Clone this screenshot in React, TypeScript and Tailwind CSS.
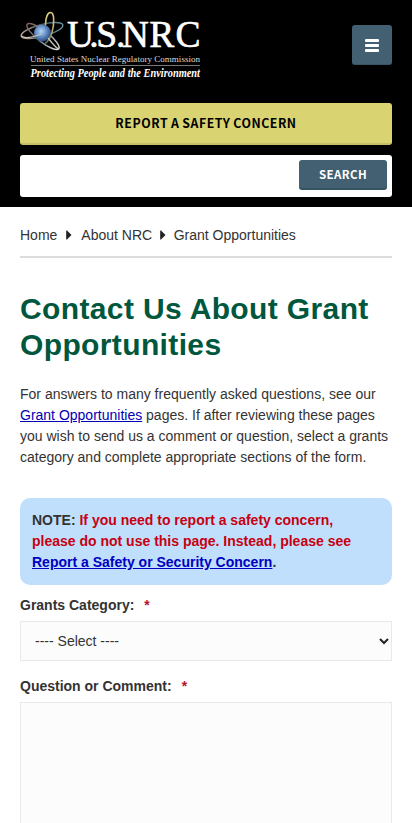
import type { ReactNode } from "react";

function Logo() {
  return (
    <svg width="184" height="72" viewBox="20 10 184 72" role="img" aria-label="U.S.NRC">
      <defs>
        <radialGradient id="core" cx="42%" cy="40%" r="60%">
          <stop offset="0" stopColor="#b5d6f2" />
          <stop offset=".5" stopColor="#6893cc" />
          <stop offset="1" stopColor="#2c4c80" />
        </radialGradient>
        <linearGradient id="goldOrbit" x1="0" y1="0" x2="0" y2="1">
          <stop offset="0" stopColor="#e4d488" />
          <stop offset=".6" stopColor="#b8a867" />
          <stop offset="1" stopColor="#536b68" />
        </linearGradient>
        <linearGradient id="wideOrbit" x1="0" y1="0" x2="1" y2="0">
          <stop offset="0" stopColor="#c8aaa0" />
          <stop offset=".55" stopColor="#46525f" />
          <stop offset="1" stopColor="#6a98a8" />
        </linearGradient>
        <linearGradient id="paleOrbit" x1="0" y1="0" x2="1" y2="0">
          <stop offset="0" stopColor="#806256" />
          <stop offset=".5" stopColor="#6d7f88" />
          <stop offset="1" stopColor="#e0e6dc" />
        </linearGradient>
      </defs>
      <ellipse cx="42" cy="30.5" rx="21.5" ry="6" transform="rotate(-15 42 30.5)" fill="none" stroke="url(#wideOrbit)" strokeWidth="1.4" />
      <ellipse cx="43" cy="36.5" rx="20" ry="5.5" transform="rotate(38 43 36.5)" fill="none" stroke="url(#paleOrbit)" strokeWidth="1.5" />
      <circle cx="42.5" cy="33" r="8.5" fill="url(#core)" />
      <path d="M45.5 25c0-7 2-12.5 5-12.5 4 0 4 11 1.5 20-1.5 5-4 9-7 11" fill="none" stroke="url(#goldOrbit)" strokeWidth="1.6" />
      <path d="M21.5 36c3 3 12 1 20-2M48 38c4 5 8 10 10.5 11" fill="none" stroke="#c9c4b6" strokeWidth="1.3" />
      <text x="67 89.3 96.3 116 121.8 149.3 175.5" y="47.3" fontFamily="Liberation Serif, serif" fontSize="37.5" fill="#fff" stroke="#fff" strokeWidth=".6">U.S.NRC</text>
      <text x="30" y="61.5" fontFamily="Liberation Serif, serif" fontSize="9" fill="#ddd" textLength="170" lengthAdjust="spacing">United States Nuclear Regulatory Commission</text>
      <path d="M31 65.5h169" stroke="#777" strokeWidth="1" />
      <text x="30.5" y="77" fontFamily="Liberation Serif, serif" fontSize="11.5" fontWeight="bold" fontStyle="italic" fill="#fff" textLength="169.5" lengthAdjust="spacingAndGlyphs">Protecting People and the Environment</text>
    </svg>
  );
}

function Caret() {
  return (
    <svg width="6" height="10" viewBox="0 0 6 10" className="shrink-0" fill="#222">
      <path d="M.2.5h.8L5.5 5 1 9.500H.2z" />
    </svg>
  );
}

function Label({ children }: { children: ReactNode }) {
  return (
    <label className="block h-[21px] font-bold leading-[21px]">
      {children}
      <span className="ml-[10px] text-[#b51230]">*</span>
    </label>
  );
}

export default function App() {
  return (
    <div className="h-[823px] overflow-hidden bg-white font-['Liberation_Sans',Arial,sans-serif] text-sm text-[#333]">
      <header className="h-[207px] bg-black px-5 pt-[10px]">
        <div className="flex h-[93px] items-start justify-between">
          <Logo />
          <button aria-label="Menu" className="mt-[15px] flex h-10 w-10 flex-col items-center justify-center gap-[2px] rounded-[3px] border-b border-[#375363] bg-[#435f72] pt-px">
            <span className="h-[3px] w-[14px] rounded-[1px] bg-white" />
            <span className="h-[3px] w-[14px] rounded-[1px] bg-white" />
            <span className="h-[3px] w-[14px] rounded-[1px] bg-white" />
          </button>
        </div>
        <button className="flex h-[42px] w-full items-center justify-center rounded-[3px] border-b-2 border-[#c5bf68] bg-[#dad372] pt-[2px] font-['Noto_Sans_CJK_JP',sans-serif] text-[12.3px] font-bold tracking-[0.55px] text-black [word-spacing:-0.5px]">
          REPORT A SAFETY CONCERN
        </button>
        <div className="mt-[10px] flex h-[42px] justify-end rounded-[3px] bg-white p-[5px]">
          <input aria-label="Search" className="min-w-0 flex-1 outline-none" />
          <button className="h-[30px] w-[88px] rounded-[3px] border-b-2 border-[#375363] bg-[#435f72] font-['Noto_Sans_CJK_JP',sans-serif] text-[11.5px] font-bold leading-[28px] tracking-[0.4px] text-white">SEARCH</button>
        </div>
      </header>
      <main className="px-5">
        <nav className="flex h-[51px] items-center border-b-2 border-[#ddd] pt-[7px] leading-[21px]">
          <span className="mr-[9px]">Home</span>
          <Caret />
          <span className="ml-[9px] mr-2">About NRC</span>
          <Caret />
          <span className="ml-[7.5px]">Grant Opportunities</span>
        </nav>
        <h1 className="mt-[33px] text-[30px] font-bold leading-9 tracking-[0.37px] text-[#00573d]">
          Contact Us About Grant<br />Opportunities
        </h1>
        <p className="mt-[21px] whitespace-nowrap leading-[21px]">
          For answers to many frequently asked questions, see our<br />
          <a className="text-[#0000b4] underline">Grant Opportunities</a> pages. If after reviewing these pages<br />
          you wish to send us a comment or question, select a grants<br />
          category and complete appropriate sections of the form.
        </p>
        <p className="mt-[30px] h-[87px] whitespace-nowrap rounded-[10px] bg-[#bfdffc] px-3 py-3 font-bold leading-[21px]">
          NOTE: <span className="text-[#c80010]">If you need to report a safety concern,<br />please do not use this page. Instead, please see</span><br />
          <a className="text-[#0000c0] underline">Report a Safety or Security Concern</a>.
        </p>
        <div className="mt-[10px]">
          <Label>Grants Category:</Label>
          <div className="mt-[5px] flex h-10 items-center justify-between border border-[#e9e9e9] bg-[#fcfcfc] pl-[14px]">
            <span>---- Select ----</span>
            <svg width="14" height="10" viewBox="0 0 14 10" fill="none" stroke="#222" strokeWidth="2"><path d="m3 3 4 4 4-4" /></svg>
          </div>
        </div>
        <div className="mt-[15px]">
          <Label>Question or Comment:</Label>
          <textarea aria-label="Question or Comment" className="mt-[5px] block h-[160px] w-full resize-none border border-[#e9e9e9] bg-[#fcfcfc] outline-none" />
        </div>
      </main>
    </div>
  );
}
